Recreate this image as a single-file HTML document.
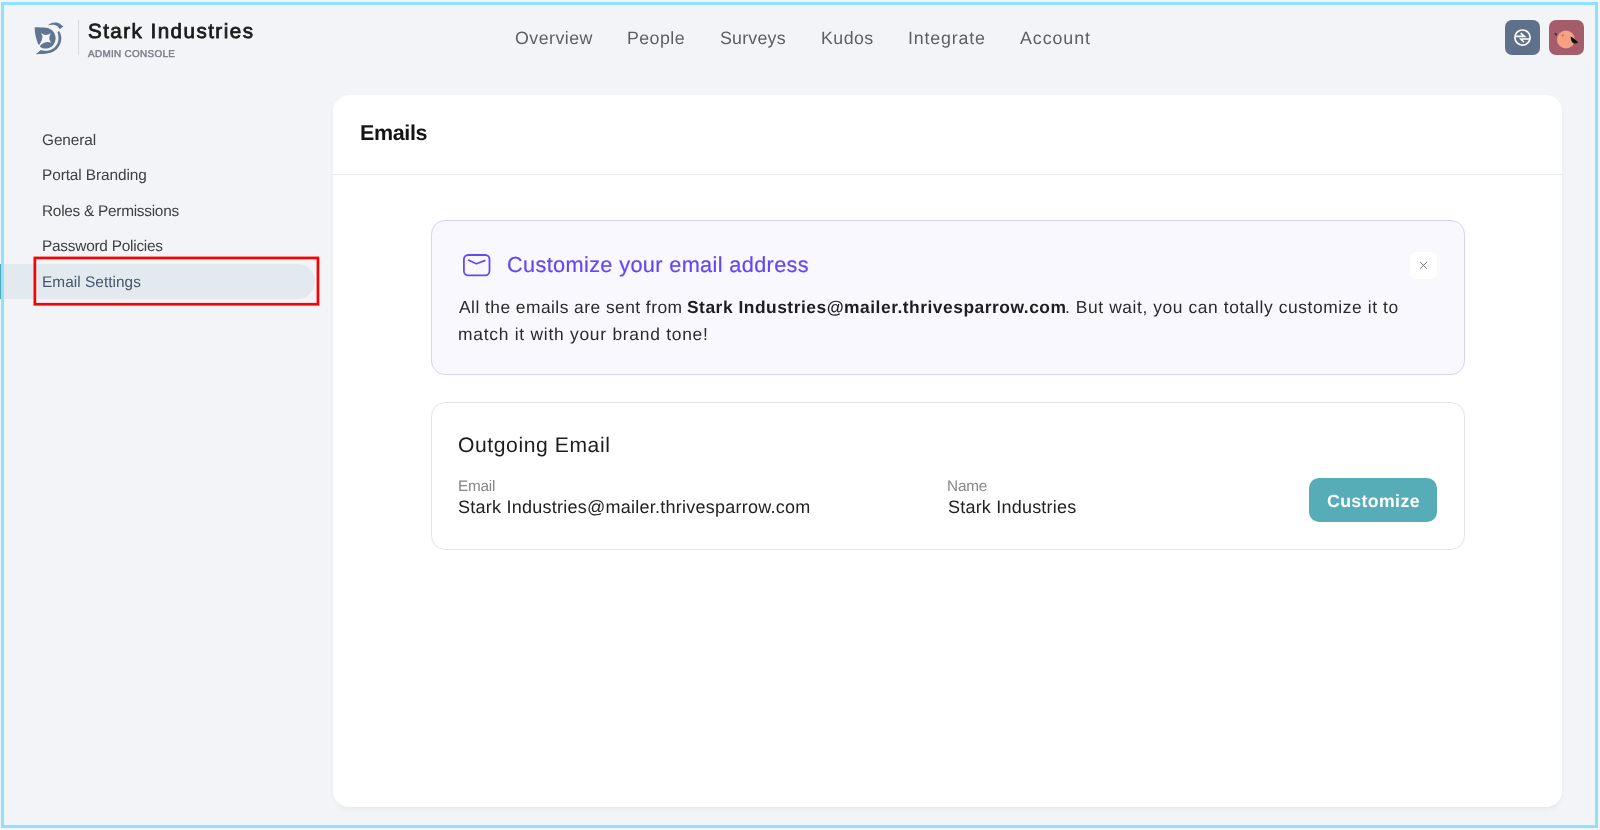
<!DOCTYPE html>
<html>
<head>
<meta charset="utf-8">
<style>
html,body{margin:0;padding:0;}
body{width:1600px;height:830px;overflow:hidden;position:relative;background:#f2f4f7;font-family:"Liberation Sans",sans-serif;}
.t{position:absolute;white-space:nowrap;line-height:1;text-rendering:geometricPrecision;z-index:5;will-change:transform;}
.frame{position:absolute;left:1px;top:2px;width:1591px;height:820px;border:3px solid #8fe2fb;z-index:50;pointer-events:none;}
.hbtn{position:absolute;top:20px;width:35px;height:35px;border-radius:7px;}
.card{position:absolute;left:333px;top:95px;width:1229px;height:712px;background:#fff;border-radius:16px;box-shadow:0 3px 6px -2px rgba(30,40,60,0.07);}
</style>
</head>
<body>
<div class="frame"></div>

<!-- header -->
<svg style="position:absolute;left:30px;top:18px" width="40" height="40" viewBox="0 0 40 40">
  <g fill="#5f7590">
    <path d="M9.9 28.4 C11.6 30.1 14 30.7 16.6 30.5 C21.5 30 25.3 26.3 25.6 20.5 C25.9 14.5 21.3 10.2 15.5 9.7 C11.5 9.3 7.5 9.1 4.7 9.2 C4.6 15 6.2 21.5 8.5 26.7 L9.5 26.6 Q14.25 19.65 11.1 14.9 Q15.75 18.9 21 14.9 Q17.6 19.75 21 24.8 Q15.3 22.05 10.3 27.6 Z"/>
    <path d="M17.7 7.6 C19.5 5.3 23.5 4 26.5 4.5 C28.8 4.9 30.5 6 32 7.4 L33.4 8.3 L29.8 11.3 C29 10 28.5 9.3 27.8 8.6 C25.5 6.5 21 6.4 17.7 7.6 Z"/>
    <path d="M27.4 14.3 L29 12.9 C30.8 15.5 31.6 18.5 31.3 21.5 C30.8 27.5 26.5 33 20.5 34.8 C16 36 10.5 36.2 5.7 36.2 C7.5 34.8 9 33.5 10.6 31.9 C12.5 32.7 15.5 33 18.5 32.5 C23.5 31.5 27.5 27.5 28.3 22.5 C28.8 19.5 28.4 16.5 27.4 14.3 Z"/>
  </g>
</svg>
<div style="position:absolute;left:78px;top:20px;width:1px;height:35px;background:#d9dde3"></div>

<div class="hbtn" style="left:1505px;background:#5f718a">
  <svg width="35" height="35" viewBox="0 0 35 35" style="position:absolute;left:0;top:0">
    <circle cx="17.5" cy="17.6" r="7.6" fill="none" stroke="#fff" stroke-width="1.7"/>
    <path d="M10.3 16.4 H19.4 L15.7 13.2 M24.6 19 H15.8 L19 22.3" fill="none" stroke="#fff" stroke-width="1.6"/>
  </svg>
</div>
<div class="hbtn" style="left:1549px;background:#a55d6c">
  <svg width="35" height="35" viewBox="0 0 35 35" style="position:absolute;left:0;top:0">
    <circle cx="16.9" cy="19.5" r="9" fill="#f5a283"/>
    <path d="M21.8 16.8 C23.5 17 26 19.5 29.2 22.6 C27.5 23.6 25.5 23.8 24.5 23.3 C22.5 22.2 21.6 20 21.8 16.8 Z" fill="#111"/>
    <path d="M5.2 13.2 L7.9 13.8 L7.3 15.8 Z" fill="#111"/>
    <path d="M12.3 14.4 L15.2 14.4 L13.8 16.9 Z" fill="#b86a72"/>
  </svg>
</div>

<!-- sidebar -->
<div style="position:absolute;left:0;top:264px;width:315px;height:35px;background:#e2e9ef;border-radius:0 17.5px 17.5px 0"></div>
<div style="position:absolute;left:0;top:264px;width:4px;height:35px;background:#4fa9b3"></div>
<svg style="position:absolute;left:0;top:0;z-index:6" width="340" height="320"><rect x="34.85" y="257.95" width="283.1" height="46.3" fill="none" stroke="#f00" stroke-width="2.7"/></svg>

<!-- main card -->
<div class="card"></div>
<div style="position:absolute;left:333px;top:174px;width:1229px;height:1px;background:#e8eaed"></div>

<!-- banner -->
<div style="position:absolute;left:431px;top:220px;width:1032px;height:153px;background:#f9f8ff;border:1px solid #d9d0fb;border-radius:14px"></div>
<svg style="position:absolute;left:460px;top:251px;z-index:5" width="34" height="28" viewBox="0 0 34 28">
  <rect x="3.9" y="4" width="25.6" height="20.3" rx="4.3" fill="none" stroke="#6649f3" stroke-width="1.8"/>
  <path d="M8.7 9.2 L16.4 12.8 L24.7 9.6" fill="none" stroke="#6649f3" stroke-width="1.7" stroke-linecap="round" stroke-linejoin="round"/>
</svg>
<div style="position:absolute;left:1410px;top:252px;width:27px;height:27px;background:#fff;border-radius:6px;z-index:5">
  <svg width="27" height="27" viewBox="0 0 27 27" style="position:absolute;left:0;top:0"><path d="M10.2 10.1 L16.8 16.7 M16.8 10.1 L10.2 16.7" stroke="#6a6a6a" stroke-width="0.95"/></svg>
</div>

<!-- outgoing email -->
<div style="position:absolute;left:431px;top:402px;width:1032px;height:146px;background:#fff;border:1px solid #e3e5ea;border-radius:14px"></div>
<div style="position:absolute;left:1309px;top:478px;width:128px;height:44px;background:#56adb8;border-radius:10px;z-index:4"></div>

<div class="t" style="left:87.5px;top:22px;font-size:20.6px;font-weight:400;color:#1b1b1b;letter-spacing:1.457px;-webkit-text-stroke:0.8px #1b1b1b">Stark Industries</div>
<div class="t" style="left:88.2px;top:50px;font-size:9.9px;font-weight:400;color:#787e88;letter-spacing:0.333px;-webkit-text-stroke:0.45px #787e88">ADMIN CONSOLE</div>
<div class="t" style="left:514.6px;top:30px;font-size:17.8px;font-weight:400;color:#5e5e5e;letter-spacing:0.471px">Overview</div>
<div class="t" style="left:627.3px;top:30px;font-size:17.8px;font-weight:400;color:#5e5e5e;letter-spacing:0.430px">People</div>
<div class="t" style="left:720.1px;top:30px;font-size:17.8px;font-weight:400;color:#5e5e5e;letter-spacing:0.217px">Surveys</div>
<div class="t" style="left:820.6px;top:30px;font-size:17.8px;font-weight:400;color:#5e5e5e;letter-spacing:0.450px">Kudos</div>
<div class="t" style="left:907.6px;top:30px;font-size:17.8px;font-weight:400;color:#5e5e5e;letter-spacing:0.850px">Integrate</div>
<div class="t" style="left:1020.4px;top:30px;font-size:17.8px;font-weight:400;color:#5e5e5e;letter-spacing:0.942px">Account</div>
<div class="t" style="left:42.2px;top:133px;font-size:15.4px;font-weight:400;color:#3f3f3f;letter-spacing:-0.083px">General</div>
<div class="t" style="left:41.8px;top:168px;font-size:15.4px;font-weight:400;color:#3f3f3f;letter-spacing:-0.089px">Portal Branding</div>
<div class="t" style="left:41.8px;top:204px;font-size:15.4px;font-weight:400;color:#3f3f3f;letter-spacing:-0.269px">Roles &amp; Permissions</div>
<div class="t" style="left:41.8px;top:239px;font-size:15.4px;font-weight:400;color:#3f3f3f;letter-spacing:-0.241px">Password Policies</div>
<div class="t" style="left:41.8px;top:275px;font-size:15.4px;font-weight:400;color:#46576e;letter-spacing:0.038px">Email Settings</div>
<div class="t" style="left:359.5px;top:123px;font-size:21.5px;font-weight:700;color:#141414;letter-spacing:-0.350px">Emails</div>
<div class="t" style="left:507.0px;top:254px;font-size:21.7px;font-weight:400;color:#6446f3;letter-spacing:0.370px;-webkit-text-stroke:0.2px #6446f3">Customize your email address</div>
<div class="t" style="left:459.4px;top:299px;font-size:17.4px;font-weight:400;color:#2a2a2a;letter-spacing:0.456px">All the emails are sent from</div>
<div class="t" style="left:687.2px;top:299px;font-size:17.4px;font-weight:700;color:#1e1e1e;letter-spacing:0.512px">Stark Industries@mailer.thrivesparrow.com</div>
<div class="t" style="left:1064.5px;top:299px;font-size:17.4px;font-weight:400;color:#2a2a2a;letter-spacing:0.589px">. But wait, you can totally customize it to</div>
<div class="t" style="left:457.8px;top:326px;font-size:17.4px;font-weight:400;color:#2a2a2a;letter-spacing:0.750px">match it with your brand tone!</div>
<div class="t" style="left:458.0px;top:435px;font-size:21.1px;font-weight:400;color:#1c1c1c;letter-spacing:0.592px">Outgoing Email</div>
<div class="t" style="left:457.8px;top:479px;font-size:15.3px;font-weight:400;color:#878787;letter-spacing:-0.225px">Email</div>
<div class="t" style="left:458.2px;top:498px;font-size:18px;font-weight:400;color:#222222;letter-spacing:0.249px">Stark Industries@mailer.thrivesparrow.com</div>
<div class="t" style="left:947.1px;top:479px;font-size:15.3px;font-weight:400;color:#878787;letter-spacing:-0.167px">Name</div>
<div class="t" style="left:947.5px;top:498px;font-size:18px;font-weight:400;color:#222222;letter-spacing:0.210px">Stark Industries</div>
<div class="t" style="left:1326.5px;top:493px;font-size:17.7px;font-weight:700;color:#ffffff;letter-spacing:0.381px">Customize</div>
</body>
</html>
